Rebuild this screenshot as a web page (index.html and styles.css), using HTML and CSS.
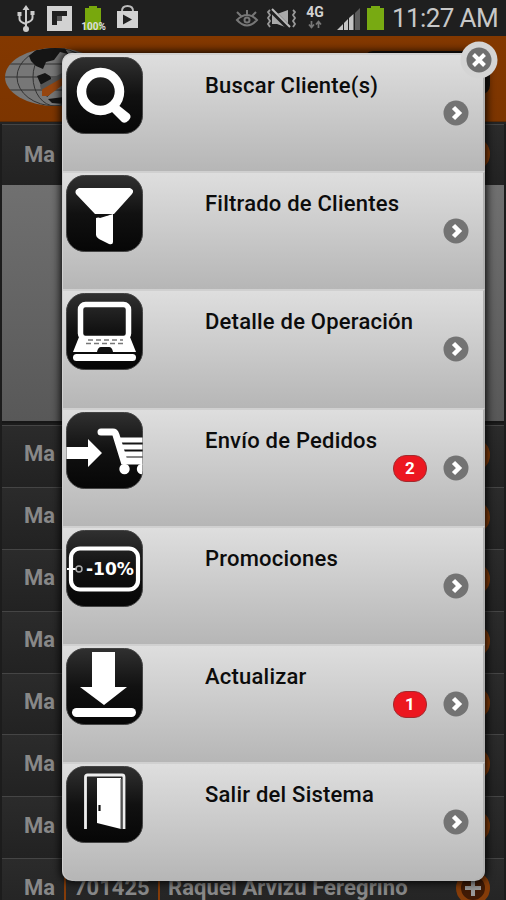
FILE: index.html
```html
<!DOCTYPE html>
<html lang="es">
<head>
<meta charset="utf-8">
<title>Clientes</title>
<link rel="stylesheet" href="styles.css">
</head>
<body>
<svg class="defs" width="0" height="0">
  <defs>
    <linearGradient id="tile" x1="0" y1="0" x2="0" y2="1">
      <stop offset="0" stop-color="#303030"/><stop offset=".5" stop-color="#111"/><stop offset="1" stop-color="#060606"/>
    </linearGradient>
    <clipPath id="clip"><rect x=".5" y=".5" width="76" height="76" rx="18"/></clipPath>
    <clipPath id="globe"><ellipse cx="55" cy="41" rx="50" ry="29"/></clipPath>
    <symbol id="bg" viewBox="0 0 77 77"><rect x=".5" y=".5" width="76" height="76" rx="18" fill="url(#tile)" stroke="#444" stroke-width="1"/></symbol>
    <symbol id="go" viewBox="0 0 26 26">
      <circle cx="13" cy="13" r="12.500" fill="#737373"/>
      <path d="M10.500 7.500 L16 13 L10.500 18.500" fill="none" stroke="#fff" stroke-width="4.500"/>
    </symbol>
    <symbol id="plus" viewBox="0 0 36 36">
      <circle cx="18" cy="18" r="14.500" fill="#401a05" stroke="#853c09" stroke-width="5"/>
      <path d="M18 10v16M10 18h16" stroke="#999" stroke-width="4"/>
    </symbol>
  </defs>
</svg>
<div class="screen">
  <div class="status">
    <svg class="status-icons" width="390" height="36" viewBox="0 0 390 36">
      <g fill="none" stroke="#ccc" stroke-width="2">
        <path d="M26 9v20M19.500 13v6q0 3 6.500 5M32.500 13v5q0 3-6.500 5"/>
      </g>
      <path d="M26 5l-3.500 5h7zM17.500 12h4v4h-4zM30.500 11h4v4h-4z" fill="#ccc"/><circle cx="26" cy="29" r="3" fill="#ccc"/>
      <rect x="47" y="6" width="25" height="25" fill="#d2d2d2"/>
      <path d="M52 11h15v5h-10v9h-5z" fill="#202020"/><path d="M57 16h5v5h-5z" fill="#555"/>
      <path d="M89 6h8v2h4v22h-16v-22h4z" fill="#78a80d"/>
      <text x="93.500" y="29.500" class="pct" text-anchor="middle">100%</text>
      <path d="M117 11h21v17h-21z" fill="#d2d2d2"/>
      <path d="M122 11q0-5 5.500-5t5.500 5" fill="none" stroke="#bbb" stroke-width="2"/>
      <path d="M123 14.500l9 5-9 5z" fill="#202020"/>
      <g fill="none" stroke="#777" stroke-width="2">
        <path d="M237 20q10-10 20 0q-10 11-20 0zM237 12l4 4M247 10v5M256 12l-4 4"/><circle cx="247" cy="20" r="2.500"/>
      </g>
      <path d="M272 14h5l11-4v18l-11-4h-5z" fill="#aaa"/>
      <path d="M271 10l18 18" stroke="#202020" stroke-width="5"/>
      <path d="M272 9l18 18" stroke="#bbb" stroke-width="2"/>
      <path d="M270 10l-2 2 2 3-2 3 2 3-2 3 2 3M293 10l2 2-2 3 2 3-2 3 2 3-2 3" fill="none" stroke="#999" stroke-width="1.800"/>
      <text x="315" y="17" class="lte" text-anchor="middle">4G</text>
      <path d="M311.500 21v6M309 24.500l2.500 3 2.500-3M318.500 28v-6M316 24.500l2.500-3 2.500 3" fill="none" stroke="#777" stroke-width="1.700"/>
      <path d="M337 30l6-6v6zM344 23l4-4v11h-4zM349 18l4.500-4v16H349z" fill="#c4c4c4"/>
      <path d="M355 13l5-5v22h-5z" fill="#5c5c5c"/>
      <path d="M371 6h9v2h4v22h-17v-22h4z" fill="#78aa12"/>
    </svg>
    <span class="clock">11:27 AM</span>
  </div>
  <div class="header">
    <svg width="110" height="86" viewBox="0 0 110 86">
      <g clip-path="url(#globe)">
        <rect width="110" height="86" fill="#777"/>
        <g fill="none" stroke="#333" stroke-width="1"><path d="M5 28h95M5 41h95M8 54h95"/><ellipse cx="55" cy="41" rx="38" ry="29"/><ellipse cx="55" cy="41" rx="22" ry="29"/></g>
        <path d="M29 20l7-6 28-4 4 8-8-2-6 8-8 2-3 7-7-3-5-5zM37 40l8-3 5 3 6 12-9 9-7-14zM48 63l16-2v7l-12-1z" fill="#151515"/>
        <path d="M42 52l22-12v8l-16 12h-6z" fill="#964610"/><path d="M40 49l22-12v5l-21 12z" fill="#555"/>
      </g>
    </svg>
    <span class="header-button"></span>
  </div>
  <div class="list">
    <div class="row first"><b>Ma</b><svg class="plus"><use href="#plus"/></svg></div>
    <div class="panel"></div>
    <div class="row"><b>Ma</b><svg class="plus"><use href="#plus"/></svg></div>
    <div class="row"><b>Ma</b><svg class="plus"><use href="#plus"/></svg></div>
    <div class="row"><b>Ma</b><svg class="plus"><use href="#plus"/></svg></div>
    <div class="row"><b>Ma</b><svg class="plus"><use href="#plus"/></svg></div>
    <div class="row"><b>Ma</b><svg class="plus"><use href="#plus"/></svg></div>
    <div class="row"><b>Ma</b><svg class="plus"><use href="#plus"/></svg></div>
    <div class="row"><b>Ma</b><svg class="plus"><use href="#plus"/></svg></div>
    <div class="row last"><b>Ma</b><i></i><b class="code">701425</b><i></i><b class="name">Raquel Arvizu Feregrino</b><svg class="plus"><use href="#plus"/></svg></div>
  </div>

  <div class="dialog">
    <div class="item">
      <svg class="icon" viewBox="0 0 77 77"><use href="#bg"/><circle cx="34.500" cy="34.500" r="19" fill="none" stroke="#fff" stroke-width="9.500"/><path d="M51 47l-6 7 11 11q3 2 6.500-1.500t1-6.500z" fill="#fff"/></svg>
      <span class="title">Buscar Cliente(s)</span><svg class="go"><use href="#go"/></svg>
    </div>
    <div class="item">
      <svg class="icon" viewBox="0 0 77 77"><use href="#bg"/><path d="M13 13h51q5 2 2 6L48 39H29L10 19q-2-4 3-6zM30 43l17-4v28q0 3-4 2l-10-5q-3-2-3-4z" fill="#fff"/><path d="M30 41l17-2-13 4z" fill="#111"/></svg>
      <span class="title">Filtrado de Clientes</span><svg class="go"><use href="#go"/></svg>
    </div>
    <div class="item">
      <svg class="icon" viewBox="0 0 77 77"><use href="#bg"/><rect x="14.500" y="11.500" width="48" height="34" rx="5" fill="none" stroke="#fff" stroke-width="5.500"/><path d="M13 44h51l6 15H7z" fill="#fff"/><path d="M22 47h35M20 50.500h38" stroke="#777" stroke-width="1.500" stroke-dasharray="5 3"/><path d="M31 59q1-5 4-5h8q3 0 4 5z" fill="#111"/><rect x="7" y="61" width="63" height="7" rx="3.500" fill="#fff"/></svg>
      <span class="title">Detalle de Operación</span><svg class="go"><use href="#go"/></svg>
    </div>
    <div class="item">
      <svg class="icon" viewBox="0 0 77 77"><use href="#bg"/><g clip-path="url(#clip)"><path d="M0 35h22v-8l14 14-14 14v-8H0z" fill="#fff"/><path d="M35 20h12q2 0 3 3l8 26H78" fill="none" stroke="#fff" stroke-width="7" stroke-linecap="round"/><path d="M52 28h26M54 35h24M56 42h22" stroke="#fff" stroke-width="4.800"/><circle cx="58.500" cy="57" r="5.200" fill="#fff"/><circle cx="76" cy="57" r="5.200" fill="#fff"/></g></svg>
      <span class="title">Envío de Pedidos</span><span class="badge">2</span><svg class="go"><use href="#go"/></svg>
    </div>
    <div class="item">
      <svg class="icon" viewBox="0 0 77 77"><use href="#bg"/><rect x="5" y="18.500" width="67" height="41" rx="9" fill="none" stroke="#fff" stroke-width="4.200"/><path d="M1 39h10" stroke="#fff" stroke-width="2"/><circle cx="13" cy="39" r="3" fill="none" stroke="#aaa" stroke-width="1.500"/><text class="discount" x="20" y="45" textLength="48" lengthAdjust="spacingAndGlyphs">-10%</text></svg>
      <span class="title">Promociones</span><svg class="go"><use href="#go"/></svg>
    </div>
    <div class="item">
      <svg class="icon" viewBox="0 0 77 77"><use href="#bg"/><path d="M26 4h23v35h12L38 57 14 39h12z" fill="#fff"/><rect x="6" y="60" width="64" height="9" rx="4.500" fill="#fff"/></svg>
      <span class="title">Actualizar</span><span class="badge">1</span><svg class="go"><use href="#go"/></svg>
    </div>
    <div class="item">
      <svg class="icon" viewBox="0 0 77 77"><use href="#bg"/><path d="M19.500 63V11q0-2 2-2H56q2 0 2 2v52" fill="none" stroke="#eee" stroke-width="2.800"/><path d="M31 12h24v51l-24-6z" fill="#fff"/><path d="M55 13v50" stroke="#777" stroke-width="1.300"/><path d="M33.500 39v6" stroke="#111" stroke-width="2.200"/></svg>
      <span class="title">Salir del Sistema</span><svg class="go"><use href="#go"/></svg>
    </div>
    <svg class="close" viewBox="0 0 38 38"><circle cx="19" cy="19" r="18.500" fill="#d4d4d4"/><circle cx="19" cy="19" r="12.500" fill="#6f6f6f"/><path d="M13.500 13.500l11 11M24.500 13.500l-11 11" stroke="#fff" stroke-width="4"/></svg>
  </div>
</div>
</body>
</html>
```
FILE: styles.css
```css
* { box-sizing: border-box; }
body { margin: 0; font-family: Roboto, "Liberation Sans", sans-serif; background: #242424; }
.defs { position: absolute; }
.screen { position: relative; width: 506px; height: 900px; overflow: hidden; }
.status { display: flex; height: 36px; background: #1f1f1f; }
.status-icons { display: block; flex: none; }
.pct { font: 700 10px Roboto, sans-serif; fill: #ddd; }
.lte { font: 700 14px Roboto, sans-serif; fill: #d2d2d2; }
.clock { width: 108px; margin-left: 2px; font-size: 26px; line-height: 36px; letter-spacing: -.6px; color: #c8c8c8; white-space: nowrap; }
.header { display: flex; justify-content: space-between; height: 86px; background: linear-gradient(#833800, #7c3500); border-bottom: 1px solid #5c2a05; }
.header-button { width: 127px; height: 44px; margin: 15px 16px 0 0; border-radius: 10px; background: #191411; }
.list { padding: 0 2px; background: #1c1c1c; }
.row { display: flex; align-items: center; height: 61.9px; padding: 0 13px 0 22px; border-top: 1px solid #454545; background: linear-gradient(#2b2b2b, #222); color: #888; font-size: 22px; white-space: nowrap; }
.row b { width: 34px; line-height: 30px; padding-bottom: 4px; }
.row.first { height: 61px; margin-top: 2px; border-color: #444; }
.row.first b { padding-bottom: 1px; }
.panel { height: 238px; margin-bottom: 2px; background: linear-gradient(#707070, #585858); border-bottom: 2px solid #171717; }
.plus { width: 36px; height: 36px; margin-left: auto; margin-bottom: 3px; flex: none; }
.row i { width: 2px; height: 62px; margin-left: 6px; background: #853c09; }
.row .code { width: 81px; margin-left: 8px; }
.row i + .code + i { margin-left: 3px; }
.row .name { width: 245px; margin-left: 8px; letter-spacing: .1px; }

.dialog { position: absolute; left: 62px; top: 53px; width: 423px; height: 828px; border-radius: 10px; background: #b7b7b7; box-shadow: 0 0 10px 1px #000; }
.item { display: grid; grid-template-columns: 142px 1fr 34px 40px; grid-template-rows: 45px 28px 1fr; height: 118.2px; border-top: 2px solid #d0d0d0; border-left: 1px solid #d0d0d0; border-right: 2px solid #b0b0b0; background: linear-gradient(#dedede, #b6b6b6); }
.item:first-child { border-radius: 10px 10px 0 0; }
.item:nth-child(7) { border-radius: 0 0 10px 10px; }
.icon { grid-column: 1; grid-row: 1 / 4; width: 77px; height: 77px; margin: 2px 0 0 3px; }
.discount { font: 700 17px "DejaVu Sans", sans-serif; fill: #fff; }
.title { grid-column: 2 / 5; grid-row: 1; padding-top: 16px; font-size: 22px; font-weight: 500; line-height: 30px; letter-spacing: .22px; color: #0c0c0c; white-space: nowrap; }
.badge { grid-column: 3; grid-row: 2; height: 27px; margin-left: -16px; margin-right: 16px; border: 1px solid #a22a2e; border-radius: 13px; background: #ec1720; color: #fff; font-size: 17px; font-weight: 700; line-height: 25px; text-align: center; }
.go { grid-column: 4; grid-row: 2; width: 26px; height: 26px; margin: 0; }
.close { position: absolute; left: 398px; top: -12px; width: 38px; height: 38px; }
```
